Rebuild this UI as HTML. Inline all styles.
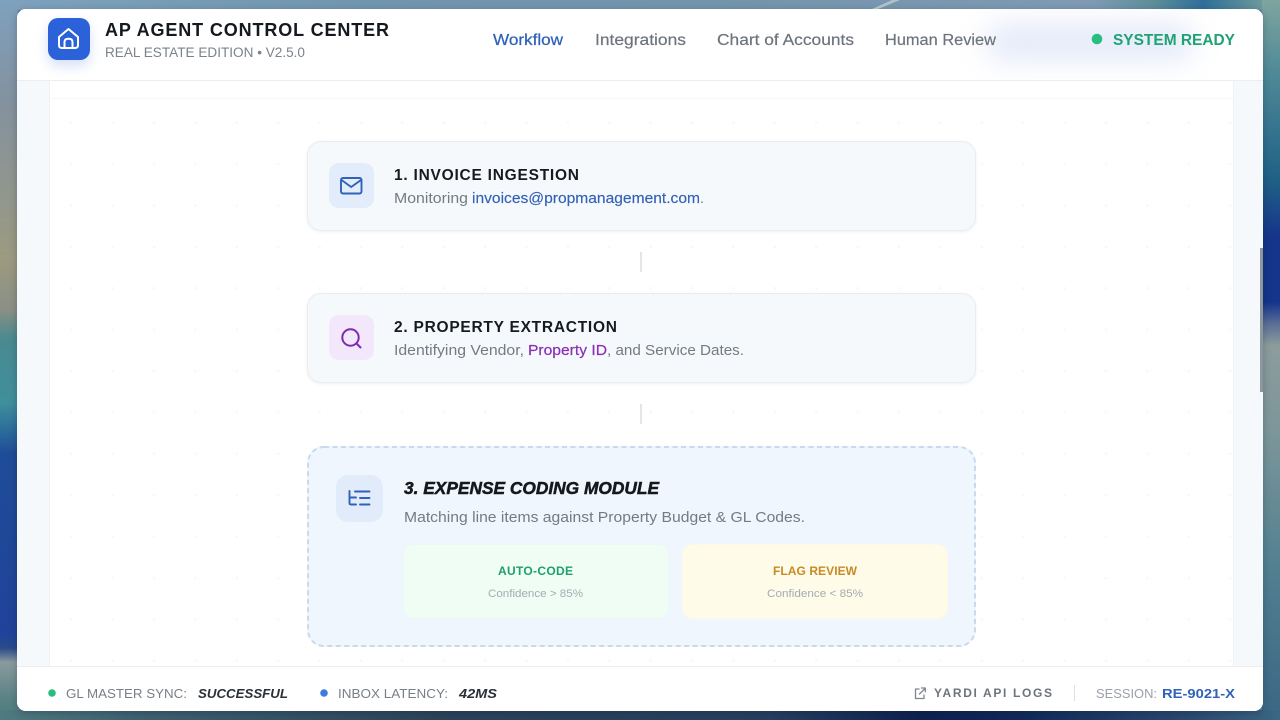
<!DOCTYPE html>
<html lang="en">
<head>
<meta charset="utf-8">
<title>AP Agent Control Center</title>
<style>
html,body{margin:0;padding:0;width:1280px;height:720px;overflow:hidden;background:#5d7f95}
*{box-sizing:border-box}
.abs{position:absolute}
#top{left:0;top:0;width:1280px;height:10px;background:linear-gradient(90deg,#7ea1bd 0,#7295ae 30%,#7595ad 60%,#7f9ab4 84%,#7f9ab4 85.5%,#5f8f9a 90%,#2f6f98 94%,#7fa59f 100%)}
#left{left:0;top:0;width:18px;height:720px;background:linear-gradient(180deg,#7ea1bd 0,#83929f 14%,#9c9a80 36%,#8a9085 43%,#4a8a90 47%,#3f8f9c 56%,#2a6a9a 60%,#1f4c98 63%,#1f439a 88%,#2a4a8a 90%,#8a9a9d 92%,#5a8285 97%,#4f7a80 100%)}
#right{left:1262px;top:0;width:18px;height:720px;background:linear-gradient(180deg,#7fa59f 0,#4f8a98 10%,#1f6186 25%,#15348c 33%,#15348c 42%,#5a6f96 45%,#8c9c9c 48%,#7c969a 60%,#4f7f90 80%,#3b6684 100%)}
#bot{left:0;top:710px;width:1280px;height:10px;background:linear-gradient(90deg,#4f7a80 0,#3f5f6f 12%,#2c4359 35%,#27405f 60%,#0f2150 72%,#132a5a 80%,#2d4a70 93%,#3b6684 100%)}
#win{left:17px;top:9px;width:1246px;height:702px;border-radius:9px;overflow:hidden;background:#f6f9fb;box-shadow:0 2px 8px rgba(10,20,40,.25)}
#main{left:32px;top:71px;width:1185px;height:586px;background-color:#fff;border-left:1px solid #f0f3f5;border-right:1px solid #f0f3f5;
background-image:radial-gradient(circle,#f6f7f8 1.1px,transparent 1.5px);background-size:41.4px 41.4px;background-position:0.5px 22px}
#mainline{left:33px;top:0;width:1183px;height:90px;border-bottom:1px solid #f6f7f9;background:#fff}
#head{left:0;top:0;width:1246px;height:72px;background:#fff;border-bottom:1px solid #ebedf0;overflow:hidden}
#glow{left:968px;top:14px;width:210px;height:38px;background:#e4eaf9;filter:blur(14px);border-radius:20px}
#foot{left:0;top:657px;width:1246px;height:45px;background:#fff;border-top:1px solid #ebedf0}
#logo{left:48px;top:18px;width:42px;height:42px;border-radius:10px;background:#2b62d9;box-shadow:0 6px 12px rgba(43,98,217,.2)}
.card{width:669px;height:90px;border-radius:14px;background:#f6f9fb;border:1px solid #e9edf0;box-shadow:0 1px 3px rgba(30,40,60,.07)}
#c3{background:#eff6fe;border-radius:17px}
.ic{border-radius:10px}
.conn{width:2px;height:20px;background:#e3e6e9}
.sub{height:73px;border-radius:10px}
svg.t{left:0;top:0;width:1280px;height:720px;position:absolute;filter:blur(.3px)}
text{font-family:"Liberation Sans",sans-serif;white-space:pre}
</style>
</head>
<body>
<div class="abs" id="top"></div>
<div class="abs" id="left"></div>
<div class="abs" id="right"></div>
<div class="abs" id="bot"></div>
<div class="abs" id="win">
  <div class="abs" id="main"></div>
  <div class="abs" id="mainline"></div>
  <div class="abs" id="head"><div class="abs" id="glow"></div></div>
  <div class="abs" id="foot"></div>
</div>
<div class="abs" style="left:1260px;top:248px;width:3px;height:144px;background:#8b969d"></div>
<div class="abs" id="logo"></div>
<div class="abs card" style="left:307px;top:141px"></div>
<div class="abs card" style="left:307px;top:293px"></div>
<div class="abs card" id="c3" style="left:307px;top:446px;height:201px;border:0;box-shadow:none"></div>
<div class="abs conn" style="left:640px;top:252px"></div>
<div class="abs conn" style="left:640px;top:404px"></div>
<div class="abs ic" style="left:329px;top:163px;width:45px;height:45px;background:#e2ecfb"></div>
<div class="abs ic" style="left:329px;top:315px;width:45px;height:45px;background:#f3e7fc"></div>
<div class="abs ic" style="left:336px;top:475px;width:47px;height:47px;background:#e1ebfa;border-radius:12px"></div>
<div class="abs sub" style="left:404px;top:545px;width:264px;background:#effdf5;box-shadow:0 0 0 1px #e9fbf0"></div>
<div class="abs sub" style="left:683px;top:545px;width:264px;background:#fefbe9;box-shadow:0 0 0 1px #fdf9e6"></div>

<svg class="t" viewBox="0 0 1280 720" xmlns="http://www.w3.org/2000/svg">
  <rect x="308" y="447" width="667" height="199" rx="16" fill="none" stroke="#c9daed" stroke-width="2" stroke-dasharray="5 3.5"/>
  <path d="M878 9 L900 0 L892 0 L872 9Z" fill="#c7d3d2" opacity=".7"/>
  <!-- logo icon: house -->
  <g fill="none" stroke="#fff" stroke-width="2" stroke-linecap="round" stroke-linejoin="round">
    <path d="M59 37 L68.5 29 L78 37 V45 Q78 48 75 48 H62 Q59 48 59 45 Z"/>
    <path d="M64.5 48 V42 Q64.5 38.8 68.5 38.8 Q72.5 38.8 72.5 42 V48"/>
  </g>
  <!-- mail icon -->
  <g fill="none" stroke="#2f62b8" stroke-width="1.9" stroke-linecap="round" stroke-linejoin="round">
    <rect x="341" y="178" width="20.5" height="15.5" rx="2"/>
    <path d="M341.5 180 L351.2 187 L361 180"/>
  </g>
  <!-- search icon -->
  <g fill="none" stroke="#7f2aaf" stroke-width="2" stroke-linecap="round">
    <circle cx="350.5" cy="337.5" r="8.2"/>
    <path d="M356.5 343.5 L360.5 347.5"/>
  </g>
  <!-- list-tree icon -->
  <g fill="none" stroke="#2f62b8" stroke-width="1.9" stroke-linecap="round" stroke-linejoin="round">
    <path d="M349.5 491 V503 Q349.5 504.5 351 504.5 H356"/>
    <path d="M349.5 497.5 H356"/>
    <path d="M355 491.5 H369.5"/>
    <path d="M360 498 H369.5"/>
    <path d="M360 504.5 H369.5"/>
  </g>
  <!-- external link icon -->
  <g fill="none" stroke="#7f868e" stroke-width="1.3" stroke-linecap="round" stroke-linejoin="round">
    <path d="M919 689 H915.5 V698.5 H924 V695"/>
    <path d="M919.5 694 L925 688.5 M921.5 688 H925.3 V691.8"/>
  </g>
  <!-- dots -->
  <circle cx="1097" cy="39" r="5.3" fill="#25c07f"/>
  <circle cx="52" cy="693" r="3.8" fill="#25c07f"/>
  <circle cx="324" cy="693" r="3.8" fill="#3f7bdc"/>
  <rect x="1074" y="685" width="1" height="16" fill="#dcdfe3"/>

  <!-- header text -->
  <text x="105" y="36" font-size="18" font-weight="700" fill="#14181f" textLength="284" lengthAdjust="spacing">AP AGENT CONTROL CENTER</text>
  <text x="105" y="57" font-size="13.5" fill="#7b8289" textLength="200" lengthAdjust="spacingAndGlyphs">REAL ESTATE EDITION • V2.5.0</text>
  <text x="493" y="45" font-size="15.5" fill="#2f63b8" stroke="#2f63b8" stroke-width=".25" textLength="70" lengthAdjust="spacingAndGlyphs">Workflow</text>
  <text x="595" y="45" font-size="15.5" fill="#6d747c" stroke="#6d747c" stroke-width=".2" textLength="91" lengthAdjust="spacingAndGlyphs">Integrations</text>
  <text x="717" y="45" font-size="15.5" fill="#6d747c" stroke="#6d747c" stroke-width=".2" textLength="137" lengthAdjust="spacingAndGlyphs">Chart of Accounts</text>
  <text x="885" y="45" font-size="15.5" fill="#6d747c" stroke="#6d747c" stroke-width=".2" textLength="111" lengthAdjust="spacingAndGlyphs">Human Review</text>
  <text x="1113" y="45" font-size="15.5" font-weight="700" fill="#1fa274" textLength="122" lengthAdjust="spacingAndGlyphs">SYSTEM READY</text>

  <!-- card 1 -->
  <text x="394" y="180" font-size="15.5" font-weight="700" fill="#161b22" textLength="185" lengthAdjust="spacing">1. INVOICE INGESTION</text>
  <text x="394" y="203" font-size="14.5" fill="#747b83" textLength="74" lengthAdjust="spacingAndGlyphs">Monitoring</text>
  <text x="472" y="203" font-size="14.5" fill="#3361b5" stroke="#3361b5" stroke-width=".15" textLength="228" lengthAdjust="spacingAndGlyphs">invoices@propmanagement.com</text>
  <text x="700" y="203" font-size="14.5" fill="#5f7fb5">.</text>

  <!-- card 2 -->
  <text x="394" y="332" font-size="15.5" font-weight="700" fill="#161b22" textLength="223" lengthAdjust="spacing">2. PROPERTY EXTRACTION</text>
  <text x="394" y="355" font-size="14.5" fill="#747b83" textLength="130" lengthAdjust="spacingAndGlyphs">Identifying Vendor,</text>
  <text x="528" y="355" font-size="14.5" fill="#8a2fb5" stroke="#8a2fb5" stroke-width=".2" textLength="79" lengthAdjust="spacingAndGlyphs">Property ID</text>
  <text x="607" y="355" font-size="14.5" fill="#747b83" textLength="137" lengthAdjust="spacingAndGlyphs">, and Service Dates.</text>

  <!-- card 3 -->
  <text x="404" y="494" font-size="17.5" font-weight="700" font-style="italic" fill="#14181f" stroke="#14181f" stroke-width=".5" textLength="255" lengthAdjust="spacingAndGlyphs">3. EXPENSE CODING MODULE</text>
  <text x="404" y="522" font-size="14.5" fill="#747b83" textLength="401" lengthAdjust="spacingAndGlyphs">Matching line items against Property Budget &amp; GL Codes.</text>
  <text x="498" y="575" font-size="12" font-weight="700" fill="#1f9f6c" textLength="75" lengthAdjust="spacing">AUTO-CODE</text>
  <text x="488" y="597" font-size="11" fill="#a4abb2" textLength="95" lengthAdjust="spacingAndGlyphs">Confidence &gt; 85%</text>
  <text x="773" y="575" font-size="12" font-weight="700" fill="#c88a24" textLength="84" lengthAdjust="spacing">FLAG REVIEW</text>
  <text x="767" y="597" font-size="11" fill="#a4abb2" textLength="96" lengthAdjust="spacingAndGlyphs">Confidence &lt; 85%</text>

  <!-- footer -->
  <text x="66" y="698" font-size="13" fill="#787f87" textLength="121" lengthAdjust="spacingAndGlyphs">GL MASTER SYNC:</text>
  <text x="198" y="698" font-size="13" font-weight="700" font-style="italic" fill="#2a3038" textLength="90" lengthAdjust="spacingAndGlyphs">SUCCESSFUL</text>
  <text x="338" y="698" font-size="13" fill="#787f87" textLength="110" lengthAdjust="spacingAndGlyphs">INBOX LATENCY:</text>
  <text x="459" y="698" font-size="13" font-weight="700" font-style="italic" fill="#2a3038" textLength="38" lengthAdjust="spacingAndGlyphs">42MS</text>
  <text x="934" y="697" font-size="12" font-weight="700" fill="#6d747c" textLength="118" lengthAdjust="spacing">YARDI API LOGS</text>
  <text x="1096" y="698" font-size="13" fill="#9aa1a9" textLength="61" lengthAdjust="spacingAndGlyphs">SESSION:</text>
  <text x="1162" y="698" font-size="13" font-weight="700" fill="#2f63b8" textLength="73" lengthAdjust="spacingAndGlyphs">RE-9021-X</text>
</svg>
</body>
</html>
